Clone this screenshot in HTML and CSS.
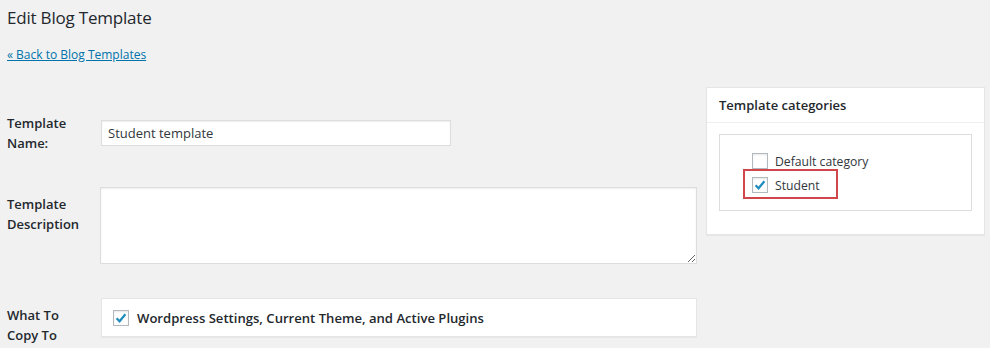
FILE: index.html
```html
<!DOCTYPE html>
<html>
<head>
<meta charset="utf-8">
<link rel="stylesheet" href="styles.css">
</head>
<body>
<div class="wrap">
  <div class="main">
    <h1 class="title">Edit Blog Template</h1>
    <p class="back"><a href="#">« Back to Blog Templates</a></p>
    <div class="row row-name">
      <label class="lbl">Template Name:</label>
      <div class="field"><input class="text-input" type="text" value="Student template"></div>
    </div>
    <div class="row row-desc">
      <label class="lbl">Template Description</label>
      <div class="field"><textarea class="text-area"></textarea></div>
    </div>
    <div class="row row-copy">
      <label class="lbl">What To Copy To</label>
      <div class="field">
        <div class="copy-box">
          <span class="cb checked"><svg viewBox="0 0 16 16" width="16" height="16"><path d="M3.6 8.2 L6.6 11.3 L12.4 4.2" fill="none" stroke="#1e8cbe" stroke-width="2.2"/></svg></span>
          <span class="copy-text">Wordpress Settings, Current Theme, and Active Plugins</span>
        </div>
      </div>
    </div>
  </div>
  <div class="side">
    <div class="postbox">
      <h2 class="postbox-title">Template categories</h2>
      <div class="postbox-inside">
        <div class="cat-list">
          <div class="cat"><span class="cb"></span><span class="cat-name">Default category</span></div>
          <div class="cat highlight"><span class="cb checked"><svg viewBox="0 0 16 16" width="16" height="16"><path d="M3.6 8.2 L6.6 11.3 L12.4 4.2" fill="none" stroke="#1e8cbe" stroke-width="2.2"/></svg></span><span class="cat-name">Student</span></div>
        </div>
      </div>
    </div>
  </div>
</div>
</body>
</html>
```

FILE: styles.css
```css
* { box-sizing: border-box; }
html, body { margin: 0; padding: 0; }
body {
  background: #f1f1f1;
  color: #23282d;
  font-family: "Open Sans", "Noto Sans", sans-serif;
  font-size: 13px;
  width: 990px;
  height: 348px;
  overflow: hidden;
}
.wrap {
  display: flex;
  padding-left: 7px;
}
.main {
  width: 690px;
  flex: none;
}
.title {
  margin: 4px 0 0 0;
  font-size: 17px;
  font-weight: 400;
  line-height: 28px;
  letter-spacing: -0.2px;
}
.back {
  margin: 13px 0 0 0;
  line-height: 20px;
  font-size: 12px;
}
.back a { color: #0073aa; text-decoration: underline; }
.row {
  display: flex;
  align-items: flex-start;
}
.lbl {
  width: 94px;
  flex: none;
  font-weight: 600;
  line-height: 20px;
  font-size: 13px;
  padding-right: 10px;
}
.field { flex: 1; }
.row-name { margin-top: 48px; }
.row-name .lbl { padding-top: 0; }
.row-name .field { padding-top: 7px; }
.text-input {
  display: block;
  width: 350px;
  height: 26px;
  border: 1px solid #ddd;
  box-shadow: inset 0 1px 2px rgba(0,0,0,.07);
  background: #fff;
  color: #32373c;
  font-family: inherit;
  font-size: 13px;
  padding: 0 6px;
  margin: 0;
  outline: none;
}
.row-desc { margin-top: 34px; }
.row-desc .lbl { padding-top: 7px; }
.text-area {
  display: block;
  width: 597px;
  height: 77px;
  border: 1px solid #ddd;
  box-shadow: inset 0 1px 2px rgba(0,0,0,.07);
  background: #fff;
  margin: 0 0 0 -1px;
  resize: vertical;
  font-family: inherit;
}
.row-copy { margin-top: 34px; }
.row-copy .lbl { padding-top: 7px; }
.copy-box {
  width: 596px;
  height: 39px;
  background: #fff;
  border: 1px solid #e5e5e5;
  box-shadow: 0 1px 1px rgba(0,0,0,.04);
  display: flex;
  align-items: center;
  padding-left: 11px;
}
.cb {
  width: 16px;
  height: 16px;
  flex: none;
  border: 1px solid #b4b9be;
  background: #fff;
  box-shadow: inset 0 1px 2px rgba(0,0,0,.1);
  display: inline-flex;
  align-items: center;
  justify-content: center;
  position: relative;
}
.cb svg { position: absolute; left: -1px; top: -1px; }
.copy-text {
  margin-left: 8px;
  font-weight: 600;
  font-size: 13.1px;
}
.side {
  margin-left: 9px;
  width: 279px;
  flex: none;
  padding-top: 87px;
}
.postbox {
  background: #fff;
  border: 1px solid #e5e5e5;
  box-shadow: 0 1px 1px rgba(0,0,0,.04);
  height: 148px;
}
.postbox-title {
  margin: 0;
  font-size: 13px;
  font-weight: 600;
  line-height: 20px;
  padding: 7px 12px 7px 12px;
  border-bottom: 1px solid #eee;
}
.postbox-inside {
  padding: 11px 12px 0 12px;
}
.cat-list {
  border: 1px solid #ddd;
  height: 77px;
  padding: 14px 0 0 32px;
}
.cat {
  display: flex;
  align-items: center;
  height: 24px;
  font-size: 12.2px;
  color: #32373c;
}
.cat-name { margin-left: 7px; }
.highlight {
  position: relative;
}
.highlight::before {
  content: "";
  position: absolute;
  left: -9px;
  top: -4px;
  width: 91px;
  height: 26px;
  border: 2px solid #d0474b;
}
```
